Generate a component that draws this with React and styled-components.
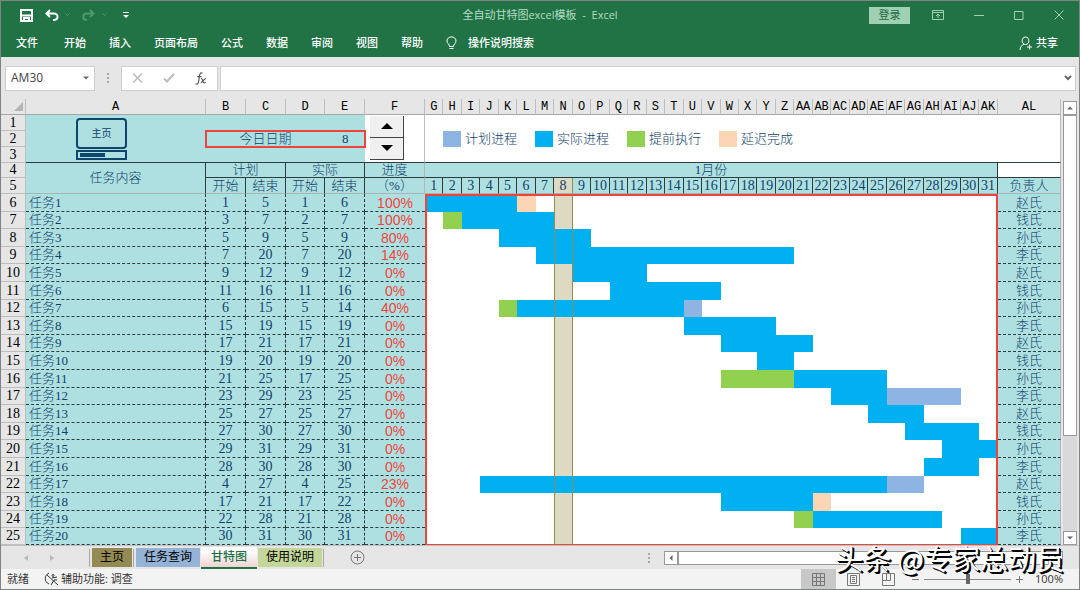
import React from "react";
import styled, { createGlobalStyle, css } from "styled-components";

const GREEN = "#217346";
const AQUA = "#aee0e1";
const INK = "#12406a";
const RED = "#ee443c";
const LINE = "#2b3d3e";
const CHROME = "#e6e6e6";

const COLORS = { actual: "#00b0f0", plan: "#8eb4e3", early: "#92d050", late: "#fcd5b5" };

const UI_FONT = `"Open Sans", "Noto Sans CJK SC", sans-serif`;
const CELL_FONT = `"Liberation Serif", "Noto Sans CJK SC", serif`;

const GlobalStyle = createGlobalStyle`
  *, *::before, *::after { box-sizing: border-box; }
  body { margin: 0; background: ${CHROME}; }
  button, input { font: inherit; color: inherit; margin: 0; padding: 0; border: 0; background: none; border-radius: 0; }
  svg { display: block; flex: none; }
`;

const Window = styled.div`
  display: flex;
  flex-direction: column;
  min-height: 100vh;
  border: 1px solid #7f8482;
  background: ${CHROME};
  font-family: ${UI_FONT};
  font-size: 11px;
  line-height: 16px;
  white-space: nowrap;
`;

const TitleBar = styled.header`
  display: grid;
  grid-template-columns: 1fr auto 1fr;
  align-items: center;
  height: 28px;
  background: ${GREEN};
  color: #b3dcc3;
`;
const QuickAccess = styled.div`
  display: flex;
  align-items: center;
  padding-left: 19px;
  color: #fff;
`;
const QuickButton = styled.button`
  display: flex;
  align-items: center;
  margin-right: ${(p) => p.$gap || 0}px;
  color: ${(p) => (p.$dim ? "#4d9a6c" : "#fff")};
`;
const WindowControls = styled.div`
  display: flex;
  justify-content: flex-end;
  align-items: center;
  gap: 30px;
  padding-right: 15px;
`;
const LoginButton = styled.button`
  width: 41px;
  height: 17px;
  margin-right: -8px;
  background: #9fd0b3;
  color: #1d6a40;
`;
const ControlButton = styled.button`
  display: flex;
  color: #9fd0b3;
`;

const Ribbon = styled.nav`
  display: flex;
  align-items: center;
  gap: 23px;
  height: 28px;
  padding: 0 21px 0 15px;
  background: ${GREEN};
  color: #fff;
  font-weight: 500;
`;
const RibbonTab = styled.button`
  margin-right: ${(p) => (p.$first ? 3 : 0)}px;
`;
const IconLabelButton = styled.button`
  display: flex;
  align-items: center;
  gap: ${(p) => p.$gap}px;
  margin-left: ${(p) => (p.$end ? "auto" : 0)};
`;

const FormulaBar = styled.div`
  display: flex;
  align-items: center;
  height: 42px;
  padding: 0 3px 0 4px;
  color: #444;
`;
const Field = styled.div`
  display: flex;
  align-items: center;
  height: 25px;
  border: 1px solid #cfcfcf;
  background: #fff;
`;
const NameField = styled(Field)`
  width: 90px;
  padding: 0 5px;
  input { flex: 1; min-width: 0; font-size: 12px; }
`;
const FunctionField = styled(Field)`
  width: 97px;
  justify-content: space-between;
  padding: 0 10px;
  margin-right: 2px;
  button { display: flex; }
`;
const FormulaField = styled(Field)`
  flex: 1;
  padding: 0 3px;
  input { flex: 1; min-width: 0; }
`;
const Grip = styled.span`
  display: flex;
  flex-direction: column;
  gap: 2px;
  margin: ${(p) => p.$margin};
  i { width: 2px; height: 2px; background: #aaa; }
`;

const SheetArea = styled.main`
  display: flex;
  flex: 1;
`;
const SheetTable = styled.table`
  flex: 1;
  width: 100%;
  min-width: 0;
  table-layout: fixed;
  border-collapse: separate;
  border-spacing: 0;
  font-family: ${CELL_FONT};
  font-size: 13px;
  line-height: 14px;
  color: ${INK};
  td, th { padding: 0; font-weight: 300; text-align: center; vertical-align: middle; overflow: hidden; }
`;
const Row = styled.tr`
  height: ${(p) => p.$h}px;
`;
const ColHead = styled.th`
  background: ${CHROME};
  border-right: 1px solid #bdbdbd;
  border-bottom: 1px solid #a6a6a6;
  color: #000;
  font-family: "Liberation Mono", monospace;
  font-size: 12px;
  && { font-weight: 400; }
`;
const Corner = styled(ColHead)`
  svg { margin-left: 13px; }
`;
const RowHead = styled.th`
  background: ${CHROME};
  border-right: 1px solid #bdbdbd;
  border-bottom: 1px solid #bdbdbd;
  color: #000;
  font-size: 14px;
  && { font-weight: 400; }
`;
const Banner = styled.td`
  background: ${(p) => (p.$white ? "#fff" : AQUA)};
  border-bottom: ${(p) => (p.$line ? `1px solid ${LINE}` : 0)};
  border-right: ${(p) => (p.$edge ? "1px solid #bdbdbd" : 0)};
`;
const HomeButton = styled.button`
  display: flex;
  flex-direction: column;
  gap: 1px;
  margin-left: 50px;
  width: 51px;
`;
const HomeScreen = styled.span`
  display: grid;
  place-items: center;
  width: 51px;
  height: 31px;
  border: 2px solid #0d456d;
  border-radius: 4px;
  font-family: ${UI_FONT};
  font-size: 10px;
  font-weight: 400;
`;
const HomeBase = styled.span`
  width: 51px;
  height: 10px;
  padding: 1px 2px;
  border: 2px solid #0d456d;
  &::before { content: ""; display: block; width: 25px; height: 4px; background: #0d456d; }
`;
const TodayCell = styled.td`
  background: ${AQUA};
  outline: 2px solid ${RED};
  outline-offset: -1px;
`;
const TodayRow = styled.div`
  display: grid;
  grid-template-columns: 3fr 1fr;
`;
const Spinner = styled.div`
  display: flex;
  flex-direction: column;
  width: 34px;
  margin: 0 0 2px 5px;
`;
const SpinButton = styled.button`
  display: grid;
  place-items: center;
  height: 22px;
  background: #f0f0f0;
  border-right: 1px solid #444;
  border-bottom: 1px solid #444;
`;
const Legend = styled.div`
  display: flex;
  gap: 18px;
  padding-left: 18px;
`;
const LegendItem = styled.span`
  display: flex;
  align-items: center;
  gap: 4px;
  &::before { content: ""; width: 18px; height: 16px; background: ${(p) => p.$color}; }
`;
const Heading = styled.th`
  background: ${(p) => (p.$white ? "#fff" : AQUA)};
  border-right: 1px solid ${(p) => (p.$soft ? "#b5b5b5" : LINE)};
  border-bottom: 1px solid ${(p) => (p.$last ? "#a9b5b5" : LINE)};
`;
const DayHeading = styled(Heading)`
  font-size: 14px;
  ${(p) => p.$today && css`background: #ddd9c3; border-right-color: #948a54;`}
`;
const DataCell = styled.td`
  background: ${AQUA};
  border-bottom: 1px dashed ${LINE};
  border-right: 1px ${(p) => (p.$soft ? "solid #b5b5b5" : `dashed ${LINE}`)};
  font-size: ${(p) => (p.$text ? 13 : 14)}px;
  && { text-align: ${(p) => (p.$left ? "left" : "center")}; font-weight: 300; }
  && { padding-left: ${(p) => (p.$left ? 3 : 0)}px; }
`;
const PercentCell = styled(DataCell)`
  border-right: 0;
  color: ${RED};
  font-family: "Liberation Sans", sans-serif;
`;
const DayCell = styled.td`
  background: ${(p) => p.$fill || (p.$today ? "#ddd9c3" : "#fff")};
  ${(p) => p.$today && css`border-left: 1px solid #948a54; border-right: 1px solid #948a54;`}
  ${(p) => p.$first && css`border-left: 2px solid ${RED};`}
  ${(p) => p.$last && css`border-right: 2px solid ${RED};`}
  ${(p) => p.$top && css`border-top: 2px solid ${RED};`}
  ${(p) => p.$bottom && css`border-bottom: 1px solid ${RED};`}
`;

const ScrollTrack = styled.div`
  display: flex;
  flex-direction: ${(p) => (p.$vertical ? "column" : "row")};
  background: #d9d9d9;
  ${(p) => (p.$vertical ? css`width: 14px; margin: 2px 2px 0;` : css`flex: 1; height: 14px; margin-right: 16px;`)}
`;
const ScrollButton = styled.button`
  display: grid;
  place-items: center;
  width: 14px;
  height: 14px;
  border: 1px solid #999;
  background: #fff;
`;
const ScrollThumb = styled.div`
  flex: ${(p) => p.$grow};
  border: 1px solid #999;
  background: #fff;
`;
const ScrollRest = styled.div`
  flex: ${(p) => p.$grow};
`;

const TabBar = styled.div`
  display: flex;
  align-items: center;
  height: 24px;
  border-top: 1px solid #c0c0c0;
  font-size: 12px;
  color: #000;
`;
const TabArrow = styled.button`
  display: flex;
  margin-left: ${(p) => p.$before}px;
  margin-right: ${(p) => p.$after}px;
`;
const SheetTab = styled.button`
  height: 20px;
  padding: 0 8px;
  margin-right: 1px;
  background: ${(p) => p.$bg};
  border-bottom: 1px solid #e6e6e6;
  ${(p) => p.$active && css`
    height: 22px;
    padding: 0 10px;
    color: ${GREEN};
    font-weight: 500;
    border-bottom: 2px solid ${GREEN};
  `}
`;
const TabRule = styled.span`
  width: 1px;
  height: 18px;
  margin-right: 2px;
  background: #a8a8a8;
`;
const AddTab = styled.button`
  display: flex;
  margin-left: 24px;
  color: #777;
`;
const HorizontalScroll = styled.div`
  display: flex;
  align-items: center;
  width: 40%;
  margin-left: auto;
`;

const StatusBar = styled.footer`
  display: flex;
  align-items: center;
  height: 20px;
  padding: 0 16px 0 6px;
  background: #f3f3f3;
  color: #333;
`;
const Accessibility = styled.button`
  display: flex;
  align-items: center;
  gap: 2px;
  margin-left: 15px;
`;
const Views = styled.div`
  display: flex;
  margin-left: auto;
`;
const ViewButton = styled.button`
  display: grid;
  place-items: center;
  width: 35px;
  height: 20px;
  color: #777;
  background: ${(p) => (p.$active ? "#c8c8c8" : "transparent")};
`;
const Zoom = styled.div`
  display: flex;
  align-items: center;
  gap: 5px;
  margin-left: 6px;
  button { display: flex; color: #777; }
`;
const ZoomSlider = styled.input`
  appearance: none;
  width: 87px;
  height: 10px;
  background: linear-gradient(#888, #888) center / 100% 1px no-repeat;
  &::-webkit-slider-thumb { appearance: none; width: 4px; height: 10px; background: #666; }
`;
const ZoomValue = styled.span`
  margin-left: 7px;
`;
const Watermark = styled.div`
  position: absolute;
  right: 16px;
  bottom: 14px;
  font-family: "Noto Sans CJK SC", sans-serif;
  font-size: 28px;
  line-height: 36px;
  white-space: nowrap;
  color: #fff;
  text-shadow: 1px 1px 0 #000, 2px 2px 0 #000;
  pointer-events: none;
`;
const Shell = styled.div`
  position: relative;
`;

const Triangle = ({ dir, size = 8, color = "#666" }) => {
  const d = {
    up: "M0 6 L4 2 L8 6Z",
    down: "M0 2 L4 6 L8 2Z",
    left: "M6 0 L2 4 L6 8Z",
    right: "M2 0 L6 4 L2 8Z",
  }[dir];
  return <svg width={size} height={size} viewBox="0 0 8 8" fill={color}><path d={d} /></svg>;
};
const Stroke = ({ w, h, d, sw = 1, children }) => (
  <svg width={w} height={h} viewBox={`0 0 ${w} ${h}`} fill="none" stroke="currentColor" strokeWidth={sw}>
    <path d={d} />
    {children}
  </svg>
);

const PLAN = [
  [1, 5, 1, 6, 100], [3, 7, 2, 7, 100], [5, 9, 5, 9, 80], [7, 20, 7, 20, 14], [9, 12, 9, 12, 0],
  [11, 16, 11, 16, 0], [6, 15, 5, 14, 40], [15, 19, 15, 19, 0], [17, 21, 17, 21, 0], [19, 20, 19, 20, 0],
  [21, 25, 17, 25, 0], [23, 29, 23, 25, 0], [25, 27, 25, 27, 0], [27, 30, 27, 30, 0], [29, 31, 29, 31, 0],
  [28, 30, 28, 30, 0], [4, 27, 4, 25, 23], [17, 21, 17, 22, 0], [22, 28, 21, 28, 0], [30, 31, 30, 31, 0],
];
const OWNERS = ["赵氏", "钱氏", "孙氏", "李氏"];
const DAYS = Array.from({ length: 31 }, (_, i) => i + 1);
const TODAY = 8;
const LETTERS = "ABCDEFGHIJKLMNOPQRSTUVWXYZ".split("");
const COLUMNS = [...LETTERS, ...LETTERS.slice(0, 12).map((l) => "A" + l)];
const WIDTHS = [25, 180, 40, 40, 39, 40, 60];
const LEGEND = [["计划进程", "plan"], ["实际进程", "actual"], ["提前执行", "early"], ["延迟完成", "late"]];

function fillFor(day, [planStart, planEnd, start, end]) {
  const planned = day >= planStart && day <= planEnd;
  const done = day >= start && day <= end;
  if (planned && done) return COLORS.actual;
  if (done) return day < planStart ? COLORS.early : COLORS.late;
  return planned ? COLORS.plan : null;
}

function Sheet() {
  return (
    <SheetTable>
      <colgroup>
        {WIDTHS.map((w, i) => <col key={i} width={w} />)}
        {DAYS.map((d) => <col key={d} />)}
        <col width={63} />
      </colgroup>
      <thead>
        <Row $h={16}>
          <Corner aria-label="全选"><svg width="9" height="9" viewBox="0 0 9 9" fill="#b5b5b5"><path d="M9 0V9H0Z" /></svg></Corner>
          {COLUMNS.map((c) => <ColHead key={c} scope="col">{c}</ColHead>)}
        </Row>
      </thead>
      <tbody>
        <Row $h={16}>
          <RowHead scope="row">1</RowHead>
          <Banner rowSpan={3} $line>
            <HomeButton><HomeScreen>主页</HomeScreen><HomeBase /></HomeButton>
          </Banner>
          <Banner colSpan={4} />
          <Banner rowSpan={3} $white $line $edge>
            <Spinner>
              <SpinButton aria-label="增加"><Triangle dir="up" size={12} color="#000" /></SpinButton>
              <SpinButton aria-label="减少"><Triangle dir="down" size={12} color="#000" /></SpinButton>
            </Spinner>
          </Banner>
          <Banner rowSpan={3} colSpan={32} $white $line $edge>
            <Legend>
              {LEGEND.map(([label, key]) => <LegendItem key={key} $color={COLORS[key]}>{label}</LegendItem>)}
            </Legend>
          </Banner>
        </Row>
        <Row $h={16}>
          <RowHead scope="row">2</RowHead>
          <TodayCell colSpan={4}><TodayRow><span>今日日期</span><span>{TODAY}</span></TodayRow></TodayCell>
        </Row>
        <Row $h={16}>
          <RowHead scope="row">3</RowHead>
          <Banner colSpan={4} $line />
        </Row>
        <Row $h={15}>
          <RowHead scope="row">4</RowHead>
          <Heading rowSpan={2} $last>任务内容</Heading>
          <Heading colSpan={2}>计划</Heading>
          <Heading colSpan={2}>实际</Heading>
          <Heading $soft>进度</Heading>
          <Heading colSpan={31}>1月份</Heading>
          <Heading $white $soft />
        </Row>
        <Row $h={16}>
          <RowHead scope="row">5</RowHead>
          <Heading $last>开始</Heading>
          <Heading $last>结束</Heading>
          <Heading $last>开始</Heading>
          <Heading $last>结束</Heading>
          <Heading $last $soft>（%）</Heading>
          {DAYS.map((d) => <DayHeading key={d} $last $today={d === TODAY}>{d}</DayHeading>)}
          <Heading $last $soft>负责人</Heading>
        </Row>
        {PLAN.map((task, i) => (
          <Row key={i} $h={i % 5 % 2 === 0 && i < 19 ? 18 : 17}>
            <RowHead scope="row">{i + 6}</RowHead>
            <DataCell $left $text>任务{i + 1}</DataCell>
            {task.slice(0, 4).map((n, k) => <DataCell key={k}>{n}</DataCell>)}
            <PercentCell>{task[4]}%</PercentCell>
            {DAYS.map((d) => (
              <DayCell
                key={d}
                $fill={fillFor(d, task)}
                $today={d === TODAY}
                $first={d === 1}
                $last={d === 31}
                $top={i === 0}
                $bottom={i === PLAN.length - 1}
              />
            ))}
            <DataCell $text $soft>{OWNERS[i % 4]}</DataCell>
          </Row>
        ))}
      </tbody>
    </SheetTable>
  );
}

export default function App() {
  return (
    <Shell>
      <GlobalStyle />
      <Window>
        <TitleBar>
          <QuickAccess>
            <QuickButton $gap={12} aria-label="保存">
              <Stroke w={13} h={13} sw={2} d="M1 1H12V12H1Z M2 6.5H11 M4 12V9H9V12" />
            </QuickButton>
            <QuickButton $gap={6} aria-label="撤消">
              <Stroke w={14} h={12} sw={2} d="M5 1L1.5 4.5L5 8 M2 4.5H8.5C14 4.5 14 11 8 11" />
            </QuickButton>
            <QuickButton $gap={12} $dim aria-label="撤消列表"><Stroke w={5} h={4} d="M.5 .5L2.5 2.5L4.5 .5" /></QuickButton>
            <QuickButton $gap={7} $dim aria-label="恢复">
              <Stroke w={13} h={12} sw={2} d="M8 1L11.5 4.5L8 8 M11 4.5H5C0 4.5 0 11 5 11" />
            </QuickButton>
            <QuickButton $gap={16} $dim aria-label="恢复列表"><Stroke w={5} h={4} d="M.5 .5L2.5 2.5L4.5 .5" /></QuickButton>
            <QuickButton aria-label="自定义快速访问工具栏">
              <svg width="6" height="6" viewBox="0 0 6 6" fill="#fff"><path d="M0 0H6V1H0Z M0 3H6L3 6Z" /></svg>
            </QuickButton>
          </QuickAccess>
          <span>全自动甘特图excel模板 &nbsp;-&nbsp; Excel</span>
          <WindowControls>
            <LoginButton>登录</LoginButton>
            <ControlButton aria-label="功能区显示选项"><Stroke w={12} h={10} d="M.5 .5H11.5V9.5H.5Z M.5 2.5H11.5 M6 8V4 M4 6L6 4L8 6" /></ControlButton>
            <ControlButton aria-label="最小化"><Stroke w={10} h={9} d="M0 4.5H10" /></ControlButton>
            <ControlButton aria-label="最大化"><Stroke w={10} h={9} d="M.5 .5H9V8.5H.5Z" /></ControlButton>
            <ControlButton aria-label="关闭"><Stroke w={10} h={10} d="M.5 .5L9.5 9.5M9.5 .5L.5 9.5" /></ControlButton>
          </WindowControls>
        </TitleBar>
        <Ribbon>
          {["文件", "开始", "插入", "页面布局", "公式", "数据", "审阅", "视图", "帮助"].map((t, i) => (
            <RibbonTab key={t} $first={i === 0}>{t}</RibbonTab>
          ))}
          <IconLabelButton $gap={11}>
            <Stroke w={11} h={14} d="M3.5 10.5C3.5 8 1 7.5 1 5C1 -.5 10 -.5 10 5C10 7.5 7.5 8 7.5 10.5Z M3.5 12.5H7.5" />
            操作说明搜索
          </IconLabelButton>
          <IconLabelButton $gap={4} $end>
            <Stroke w={13} h={14} d="M6.5 8.5C2 8.5 2 1 6.5 1C11 1 11 8.5 6.5 8.5Z M1 14C1 11 3 9 5 8 M8 11H13 M10.5 8.5V13.5" />
            共享
          </IconLabelButton>
        </Ribbon>
        <FormulaBar>
          <NameField>
            <input aria-label="名称框" defaultValue="AM30" />
            <button aria-label="名称列表"><Triangle dir="down" size={6} /></button>
          </NameField>
          <Grip $margin="0 12px 0 12px"><i /><i /><i /></Grip>
          <FunctionField>
            <button aria-label="取消"><svg width="11" height="10" viewBox="0 0 11 10" fill="none" stroke="#bcbcbc" strokeWidth="1.5"><path d="M1 .5L10 9.5M10 .5L1 9.5" /></svg></button>
            <button aria-label="输入"><svg width="12" height="10" viewBox="0 0 12 10" fill="none" stroke="#bcbcbc" strokeWidth="2"><path d="M1 5.5L4 8.5L11 1" /></svg></button>
            <button aria-label="插入函数"><svg width="12" height="13" viewBox="0 0 12 13" fill="none" stroke="#555" strokeWidth="1.2"><path d="M7.5 1.3C5.5 .2 4.8 2 4.5 4L3.5 10C3.2 12 2 12.5 .5 11.8 M2.2 4.7H6.5 M6 6.5C8 6 7.5 11 9 10.8Q10 11 10.8 10 M11 6.5C9.5 6 7.5 11 5.8 10.6" /></svg></button>
          </FunctionField>
          <FormulaField>
            <input aria-label="编辑栏" />
            <button aria-label="展开编辑栏"><svg width="8" height="6" viewBox="0 0 8 6" fill="none" stroke="#666" strokeWidth="2"><path d="M1 1L4 4L7 1" /></svg></button>
          </FormulaField>
        </FormulaBar>
        <SheetArea>
          <Sheet />
          <ScrollTrack $vertical>
            <ScrollButton aria-label="向上滚动"><Triangle dir="up" size={6} /></ScrollButton>
            <ScrollThumb $grow={77} />
            <ScrollRest $grow={23} />
            <ScrollButton aria-label="向下滚动"><Triangle dir="down" size={6} /></ScrollButton>
          </ScrollTrack>
        </SheetArea>
        <TabBar>
          <TabArrow $before={23} $after={21} aria-label="上一个工作表"><svg width="5" height="8" viewBox="0 0 5 8" fill="#b8b8b8"><path d="M4 1V7L0 4Z" /></svg></TabArrow>
          <TabArrow $before={0} $after={34} aria-label="下一个工作表"><svg width="5" height="8" viewBox="0 0 5 8" fill="#b8b8b8"><path d="M0 1V7L4 4Z" /></svg></TabArrow>
          <TabRule />
          <SheetTab $bg="#948a54">主页</SheetTab>
          <TabRule />
          <SheetTab $bg="#95b3d7">任务查询</SheetTab>
          <SheetTab $active $bg="linear-gradient(#fff 20%, #f0d3d1)">甘特图</SheetTab>
          <SheetTab $bg="#c4d79b">使用说明</SheetTab>
          <TabRule />
          <AddTab aria-label="新工作表"><Stroke w={15} h={15} d="M1 7.5A6.5 6.5 0 0 1 14 7.5A6.5 6.5 0 0 1 1 7.5Z M4 7.5H11 M7.5 4V11" /></AddTab>
          <HorizontalScroll>
            <Grip $margin="0 14px 0 0"><i /><i /><i /></Grip>
            <ScrollTrack>
              <ScrollButton aria-label="向左滚动"><Triangle dir="left" size={6} /></ScrollButton>
              <ScrollThumb $grow={1} />
              <ScrollButton aria-label="向右滚动"><Triangle dir="right" size={6} /></ScrollButton>
            </ScrollTrack>
          </HorizontalScroll>
        </TabBar>
        <StatusBar>
          <span>就绪</span>
          <Accessibility>
            <Stroke w={15} h={14} d="M5 1C0 3 0 10 5 12 M3 3L14 13 M8 6L13 5 M10 8L7 13 M10 8L13 8">
              <circle cx="9" cy="3.5" r="1" />
            </Stroke>
            辅助功能: 调查
          </Accessibility>
          <Views>
            <ViewButton $active aria-label="普通"><Stroke w={13} h={13} d="M.5 .5H12.5V12.5H.5Z M4.5 0V13M8.5 0V13M0 4.5H13M0 8.5H13" /></ViewButton>
            <ViewButton aria-label="页面布局视图"><Stroke w={13} h={13} d="M.5 .5H12.5V12.5H.5Z M3.5 2.5H9.5V10.5H3.5Z M5 4.5H8M5 6.5H8M5 8.5H8" /></ViewButton>
            <ViewButton aria-label="分页预览"><Stroke w={13} h={13} d="M.5 .5H12.5V12.5H.5Z M4.5 0V7.5M8.5 0V7.5H0" /></ViewButton>
          </Views>
          <Zoom>
            <button aria-label="缩小"><Stroke w={7} h={7} d="M0 3.5H7" /></button>
            <ZoomSlider type="range" aria-label="缩放" min="0" max="200" defaultValue="100" />
            <button aria-label="放大"><Stroke w={7} h={7} d="M0 3.5H7M3.5 0V7" /></button>
            <ZoomValue>100%</ZoomValue>
          </Zoom>
        </StatusBar>
      </Window>
      <Watermark>头条 @专家总动员</Watermark>
    </Shell>
  );
}
